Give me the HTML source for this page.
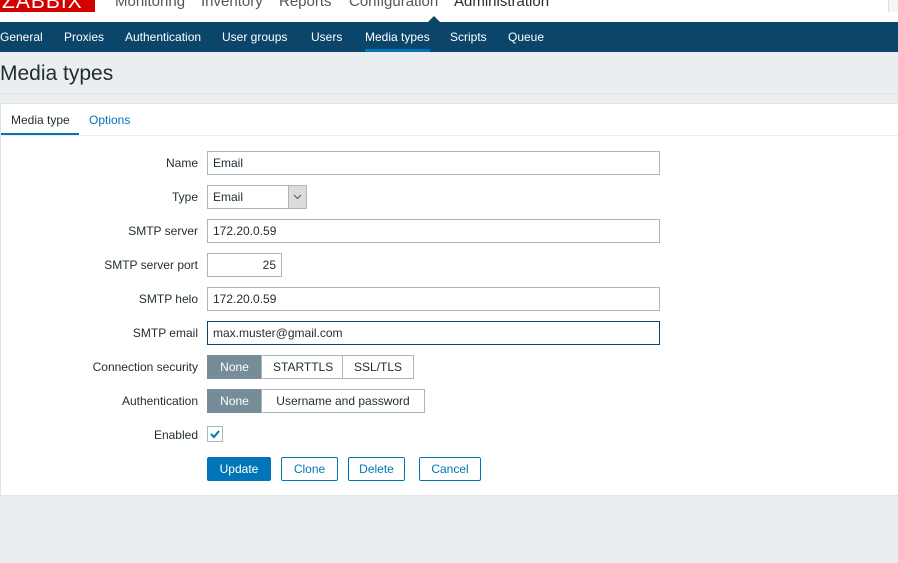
<!DOCTYPE html>
<html><head><style>
*{box-sizing:border-box;margin:0;padding:0}
body{width:898px;height:563px;overflow:hidden;background:#ebeef0;font-family:"Liberation Sans",sans-serif;font-size:12px;color:#1f2c33;position:relative}
.a{position:absolute}
.top{left:0;top:0;width:898px;height:22px;background:#fff}
.logo{left:0;top:-8px;width:95px;height:20px;background:#d40000;color:#fff;font-size:21px;line-height:20px;padding-left:2px;letter-spacing:1px}
.tm{top:-8px;font-size:15px;color:#555;line-height:20px}
.nav{left:0;top:22px;width:898px;height:30px;background:#0b466a}
.nav span{position:absolute;top:8px;color:#fff;font-size:12px}
.panel{left:0;top:103px;width:898px;height:393px;background:#fff;border:1px solid #dfe4e7;border-right:none}
.lbl{right:700px;text-align:right;width:200px;font-size:12px}
.in{left:207px;height:24px;border:1px solid #a9b7bf;background:#fff;padding-left:5px;line-height:22px}
.seg{left:207px;height:24px;display:flex}
.seg div{border:1px solid #a9b7bf;margin-left:-1px;padding:0 11px;line-height:22px;background:#fff}
.seg div.on{background:#768d99;color:#fff;border-color:#768d99;margin-left:0}
.btn{top:457px;height:24px;border:1px solid #0275b8;color:#0275b8;background:#fff;text-align:center;line-height:22px;border-radius:2px}
</style></head><body>
<div class="a top"></div>
<div class="a logo">ZABBIX</div>
<div class="a tm" style="left:115px">Monitoring</div>
<div class="a tm" style="left:201px">Inventory</div>
<div class="a tm" style="left:279px">Reports</div>
<div class="a tm" style="left:349px">Configuration</div>
<div class="a tm" style="left:454px;color:#1f2c33">Administration</div>
<div class="a" style="left:888px;top:0;width:10px;height:12px;border-left:1px solid #ddd;background:#f5f5f5"></div>
<div class="a nav">
<span style="left:0">General</span><span style="left:64px">Proxies</span><span style="left:125px">Authentication</span><span style="left:222px">User groups</span><span style="left:311px">Users</span><span style="left:365px">Media types</span><span style="left:450px">Scripts</span><span style="left:508px">Queue</span>
<div class="a" style="left:365px;top:27px;width:65px;height:3px;background:#0275b8"></div>
<div class="a" style="left:428px;top:-6px;width:0;height:0;border-left:6px solid transparent;border-right:6px solid transparent;border-bottom:6px solid #0b466a"></div>
</div>
<div class="a" style="left:0;top:62px;font-size:21px;color:#1f2c33">Media types</div>
<div class="a" style="left:0;top:93px;width:898px;height:1px;background:#dfe4e7"></div>
<div class="a panel"></div>
<div class="a" style="left:11px;top:113px">Media type</div>
<div class="a" style="left:89px;top:113px;color:#0275b8">Options</div>
<div class="a" style="left:1px;top:133px;width:78px;height:3px;background:#0275b8"></div>
<div class="a" style="left:1px;top:135px;width:897px;height:1px;background:#ebeef0"></div>

<div class="a lbl" style="top:156px">Name</div>
<div class="a in" style="top:151px;width:453px">Email</div>
<div class="a lbl" style="top:190px">Type</div>
<div class="a in" style="top:185px;width:100px">Email</div>
<div class="a" style="left:288px;top:186px;width:18px;height:22px;background:#dcdcdc;border-left:1px solid #a9b7bf"><svg width="17" height="22" viewBox="0 0 17 22"><path d="M5 9l3.5 3.5L12 9" fill="none" stroke="#555" stroke-width="1"/></svg></div>
<div class="a lbl" style="top:224px">SMTP server</div>
<div class="a in" style="top:219px;width:453px">172.20.0.59</div>
<div class="a lbl" style="top:258px">SMTP server port</div>
<div class="a in" style="top:253px;width:75px;text-align:right;padding-right:5px">25</div>
<div class="a lbl" style="top:292px">SMTP helo</div>
<div class="a in" style="top:287px;width:453px">172.20.0.59</div>
<div class="a lbl" style="top:326px">SMTP email</div>
<div class="a in" style="top:321px;width:453px;border-color:#0b466a">max.muster@gmail.com</div>
<div class="a lbl" style="top:360px">Connection security</div>
<div class="a seg" style="top:355px"><div class="on" style="width:55px;text-align:center">None</div><div style="width:82px;text-align:center">STARTTLS</div><div style="width:72px;text-align:center">SSL/TLS</div></div>
<div class="a lbl" style="top:394px">Authentication</div>
<div class="a seg" style="top:389px"><div class="on" style="width:55px;text-align:center">None</div><div style="width:164px;text-align:center">Username and password</div></div>
<div class="a lbl" style="top:428px">Enabled</div>
<div class="a" style="left:207px;top:426px;width:16px;height:16px;border:1px solid #a9b7bf;background:#fff"><svg width="14" height="14" viewBox="0 0 14 14"><path d="M3 7l3 3 5-6" fill="none" stroke="#0275b8" stroke-width="2"/></svg></div>
<div class="a btn" style="left:207px;width:64px;background:#0275b8;color:#fff">Update</div>
<div class="a btn" style="left:281px;width:57px">Clone</div>
<div class="a btn" style="left:348px;width:57px">Delete</div>
<div class="a btn" style="left:419px;width:62px">Cancel</div>
</body></html>
